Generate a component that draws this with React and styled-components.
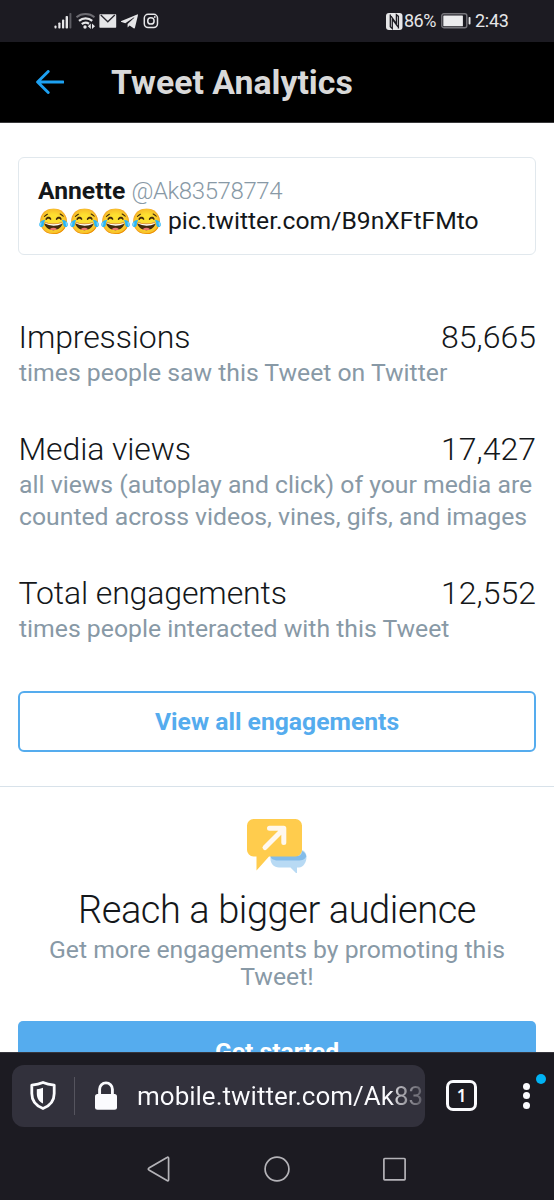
import React from "react";
import styled, { createGlobalStyle } from "styled-components";

const metrics = [
  {
    name: "Impressions",
    value: "85,665",
    lines: ["times people saw this Tweet on Twitter"],
  },
  {
    name: "Media views",
    value: "17,427",
    lines: [
      "all views (autoplay and click) of your media are",
      "counted across videos, vines, gifs, and images",
    ],
  },
  {
    name: "Total engagements",
    value: "12,552",
    lines: ["times people interacted with this Tweet"],
  },
];

const StatusIcons = () => (
  <svg width="108" height="20" viewBox="52 11 108 20" fill="none">
    <g fill="#e6e6e8">
      <rect x="54.5" y="25.5" width="2" height="3" rx="0.8" />
      <rect x="58.3" y="22.5" width="2.2" height="6" rx="0.8" />
      <rect x="62" y="19.5" width="2.2" height="9" rx="0.8" />
      <rect x="65.6" y="16" width="2.4" height="12.5" rx="0.8" />
      <rect x="69.4" y="13" width="2" height="15.5" rx="0.8" fill="#5d5c63" />
    </g>
    <path d="M76.5 17.3c5-4.3 13-4.3 18 0" stroke="#6d6c72" strokeWidth="2" />
    <path d="M79 20.8c3.8-3.2 9.4-3.2 13.2 0" stroke="#e6e6e8" strokeWidth="2.2" />
    <path d="M81.8 24.2c2-1.7 5-1.9 7.2-.5" stroke="#e6e6e8" strokeWidth="2.2" />
    <circle cx="85" cy="27" r="1.7" fill="#e6e6e8" />
    <path d="M90.8 23.5v5.4l-3-2.7zM92 23.5v5.4l3-2.7z" fill="#e6e6e8" />
    <rect x="99.4" y="14.3" width="16.8" height="13.4" rx="0.6" fill="#e6e6e8" />
    <path d="M100.8 15l7 6.8 7-6.8" stroke="#2a2930" strokeWidth="1.3" />
    <path
      d="M137.2 14.4 121.4 21c-.7.3-.5.9.1 1.1l3.8 1.2 8.5-5.8c.5-.3.8 0 .5.3l-6.7 6.2v3.5l2-1.9 4 2.6c.7.4 1.2.1 1.4-.7l2.9-12.1c.2-.9-.1-1.2-.7-1z"
      fill="#e6e6e8"
    />
    <rect x="144.3" y="14.3" width="13.2" height="13.2" rx="3.8" stroke="#e6e6e8" strokeWidth="1.5" />
    <circle cx="150.9" cy="20.9" r="3.2" stroke="#e6e6e8" strokeWidth="1.5" />
    <circle cx="154.8" cy="17" r="0.9" fill="#e6e6e8" />
  </svg>
);

const NfcIcon = () => (
  <svg width="17" height="17" viewBox="0 0 17 17">
    <rect width="16.5" height="17" rx="3" fill="#e6e6e8" />
    <path
      d="M4.3 1.5v12.2l2 1.8V6.2l5.5 7.4M12.4 15.5V3.4l-2-1.8v9.2L5 3.2"
      fill="none"
      stroke="#1c1b22"
      strokeWidth="1.3"
    />
  </svg>
);

const BatteryIcon = () => (
  <svg width="31" height="16" viewBox="0 0 31 16" fill="none">
    <rect x="0.8" y="0.8" width="25" height="13.9" rx="2" stroke="#77767c" strokeWidth="1.4" />
    <rect x="2.3" y="2.4" width="19.6" height="10.8" rx="0.5" fill="#ececee" />
    <rect x="27.6" y="4" width="1.9" height="7.6" rx="0.8" fill="#e6e6e8" />
  </svg>
);

const BackArrow = () => (
  <svg width="28" height="24" viewBox="0 0 28 24" fill="none">
    <path
      d="M12.2 1.5 1.6 12l10.6 10.5M2 12h25"
      stroke="#1da1f2"
      strokeWidth="2.9"
      strokeLinecap="round"
      strokeLinejoin="round"
    />
  </svg>
);

const PromoIcon = () => (
  <svg width="60" height="54" viewBox="0 0 60 54">
    <path
      d="M29 31h24.5c4 0 6 3.4 6 7 0 5.4-3 10-7.5 10.5H50v6.500l-6.500-6.500H32c-5 0-8.600-4-8.600-9 0-3.500 2-8.500 5.600-8.500z"
      fill="#b8daf4"
    />
    <path d="M23.500 37h27c3 0 4.500-2.300 4.500-5 2.500 1.200 4 3.200 4.300 5.500-1.500 3-4.500 4-7.300 4H31c-3.500 0-7.500-1.500-7.500-4.500z" fill="#83bce9" />
    <path
      d="M6.5 0h42a6.5 6.5 0 0 1 6.5 6.5V31a6.5 6.5 0 0 1-6.5 6.5H22L9.5 51.5v-14h-3A6.5 6.5 0 0 1 0 31V6.500A6.500 6.500 0 0 1 6.500 0z"
      fill="#ffcc4d"
    />
    <path
      d="M18 28.500 36 10.500M22.500 9.300h14.300v14.300"
      fill="none"
      stroke="#fff8ee"
      strokeWidth="5"
      strokeLinecap="round"
      strokeLinejoin="round"
    />
  </svg>
);

const ShieldIcon = () => (
  <svg width="26" height="29" viewBox="0 0 26 29">
    <path
      d="M13 1.5c3.5 1.5 7 2.2 11.2 2.6v8.4c0 7-4.2 12.3-11.2 15-7-2.7-11.2-8-11.2-15V4.1C6 3.7 9.5 3 13 1.5z"
      fill="none"
      stroke="#fbfbfe"
      strokeWidth="2.8"
      strokeLinejoin="round"
    />
    <path d="M13 6.8v15.6c-4.2-2-6.2-5.3-6.2-9.7V8.3c2.2-.3 4.2-.8 6.2-1.5z" fill="#fbfbfe" />
  </svg>
);

const LockIcon = () => (
  <svg width="22" height="29" viewBox="0 0 22 29">
    <rect y="13" width="22" height="15.7" rx="2.5" fill="#fbfbfe" />
    <path d="M4.6 14V8.3a6.4 6.4 0 0 1 12.8 0V14" fill="none" stroke="#fbfbfe" strokeWidth="2.9" />
  </svg>
);

const NavIcons = () => (
  <svg width="260" height="28" viewBox="147 1155 260 28" fill="none" stroke="#b4b3b8" strokeWidth="1.7">
    <path d="M168.6 1158.3v21.4c0 1-.8 1.400-1.600.9l-18.100-10.700c-.8-.5-.8-1.300 0-1.800l18.100-10.700c.8-.5 1.600-.1 1.600.9z" />
    <circle cx="277" cy="1169" r="11.9" />
    <rect x="383.9" y="1158.5" width="21.2" height="21.4" rx="0.8" />
  </svg>
);

const App = () => {
  return (
    <Screen>
      <GlobalStyle />
      <StatusBar>
        <StatusIcons />
        <StatusRight>
          <NfcIcon />
          <StatusText>86%</StatusText>
          <BatteryIcon />
          <Clock>2:43</Clock>
        </StatusRight>
      </StatusBar>

      <Header>
        <BackArrow />
        <Title>Tweet Analytics</Title>
      </Header>

      <Content>
        <TweetCard>
          <TweetAuthor>
            <strong>Annette</strong> <Handle>@Ak83578774</Handle>
          </TweetAuthor>
          <TweetBody>
            <Emoji>😂😂😂😂</Emoji>
            <span>pic.twitter.com/B9nXFtFMto</span>
          </TweetBody>
        </TweetCard>

        <Metrics>
          {metrics.map((metric) => (
            <div key={metric.name}>
              <MetricRow>
                <MetricName>{metric.name}</MetricName>
                <span>{metric.value}</span>
              </MetricRow>
              {metric.lines.map((line) => (
                <MetricNote key={line}>{line}</MetricNote>
              ))}
            </div>
          ))}
        </Metrics>

        <OutlineButton>View all engagements</OutlineButton>

        <Promo>
          <PromoIcon />
          <PromoTitle>Reach a bigger audience</PromoTitle>
          <PromoText>
            Get more engagements by promoting this
            <br />
            Tweet!
          </PromoText>
          <SolidButton>Get started</SolidButton>
        </Promo>
      </Content>

      <BrowserBar>
        <AddressBar>
          <ShieldIcon />
          <Divider />
          <LockIcon />
          <Address>mobile.twitter.com/Ak83</Address>
        </AddressBar>
        <TabCount>1</TabCount>
        <MenuButton aria-label="Menu">
          <Dot />
          <Dot />
          <Dot />
          <UpdateBadge />
        </MenuButton>
      </BrowserBar>

      <NavBar>
        <NavIcons />
      </NavBar>
    </Screen>
  );
};

// Styled Components
const GlobalStyle = createGlobalStyle`
  * {
    box-sizing: border-box;
  }

  body {
    margin: 0;
    font-family: Roboto, "Liberation Sans", sans-serif;
    color: #14171a;
  }

  button {
    font-family: inherit;
  }
`;

const Screen = styled.div`
  width: 554px;
  height: 1200px;
  display: flex;
  flex-direction: column;
  overflow: hidden;
  background: #fff;
`;

const StatusBar = styled.div`
  flex: none;
  height: 42px;
  padding: 0 46px 0 52px;
  display: flex;
  align-items: center;
  justify-content: space-between;
  background: #1c1b22;
  color: #e6e6e8;
`;

const StatusRight = styled.div`
  display: flex;
  align-items: center;
`;

const StatusText = styled.span`
  width: 37px;
  margin-left: 1px;
  font-size: 18px;
  letter-spacing: -0.5px;
  line-height: 20px;
  white-space: nowrap;
`;

const Clock = styled(StatusText)`
  width: 33px;
  margin-left: 3px;
  letter-spacing: -0.3px;
`;

const Header = styled.header`
  flex: none;
  height: 81px;
  padding-left: 36px;
  display: flex;
  align-items: center;
  gap: 47px;
  background: #000;
  border-bottom: 1px solid #38383a;
`;

const Title = styled.h1`
  margin: 0;
  padding-top: 1px;
  font-size: 33.8px;
  font-weight: 700;
  line-height: 40px;
  color: #d9d9d9;
`;

const Content = styled.main`
  flex: 1;
  min-height: 0;
  overflow: hidden;
  padding-top: 34px;
`;

const TweetCard = styled.div`
  height: 98px;
  margin: 0 18px;
  padding: 18px 20px;
  border: 1.5px solid #e1e8ed;
  border-radius: 6px;
  font-size: 24.7px;
  line-height: 30px;
`;

const TweetAuthor = styled.div`
  margin-left: -1px;
  white-space: nowrap;
`;

const Handle = styled.span`
  color: #8899a6;
  font-size: 24px;
  font-weight: 300;
  letter-spacing: -0.4px;
`;

const TweetBody = styled.div`
  display: flex;
  gap: 7px;
  height: 30px;
  margin-left: -1px;
  white-space: nowrap;
`;

const Emoji = styled.span`
  width: 123px;
  padding-top: 1px;
  font-family: "Noto Color Emoji", Roboto, sans-serif;
  font-size: 25px;
`;

const Metrics = styled.section`
  display: flex;
  flex-direction: column;
  gap: 40px;
  padding: 62px 18px 0 19px;
`;

const MetricRow = styled.div`
  display: flex;
  justify-content: space-between;
  font-size: 32px;
  font-weight: 300;
  line-height: 40px;
`;

const MetricName = styled.span`
  margin-left: -0.5px;
  letter-spacing: -0.12px;
`;

const MetricNote = styled.div`
  font-size: 24.75px;
  line-height: 32px;
  color: #8899a6;
  white-space: nowrap;
`;

const OutlineButton = styled.button`
  display: block;
  width: 518px;
  height: 61px;
  margin: 46px 18px 0;
  padding: 0;
  border: 2px solid #55acee;
  border-radius: 6px;
  background: #fff;
  color: #55acee;
  font-size: 24.7px;
  font-weight: 700;
`;

const Promo = styled.section`
  display: flex;
  flex-direction: column;
  align-items: center;
  margin-top: 34px;
  padding: 32px 18px 0;
  border-top: 1px solid #d8e2ea;
`;

const PromoTitle = styled.h2`
  margin: 15px 0 0;
  font-size: 38px;
  font-weight: 300;
  letter-spacing: -0.42px;
  line-height: 44px;
  white-space: nowrap;
`;

const PromoText = styled.p`
  margin: 4px 0 0;
  font-size: 24.75px;
  line-height: 27px;
  text-align: center;
  color: #8899a6;
  white-space: nowrap;
`;

const SolidButton = styled.button`
  flex: none;
  width: 518px;
  height: 61px;
  margin-top: 31px;
  padding: 0;
  border: 0;
  border-radius: 5px;
  background: #55acee;
  color: #fff;
  font-size: 24.7px;
  font-weight: 700;
`;

const BrowserBar = styled.div`
  flex: none;
  height: 86px;
  padding: 0 18px 0 12px;
  display: flex;
  align-items: center;
  background: #1c1b22;
  border-top: 1px solid #37363d;
`;

const AddressBar = styled.div`
  width: 413px;
  height: 62px;
  padding-left: 18px;
  display: flex;
  align-items: center;
  overflow: hidden;
  background: #32313c;
  border-radius: 12px;
`;

const Divider = styled.div`
  width: 1px;
  height: 38px;
  margin: 0 20px 0 18px;
  background: #55545e;
`;

const Address = styled.span`
  flex: 1;
  margin-left: 20px;
  font-size: 26px;
  line-height: 32px;
  white-space: nowrap;
  overflow: hidden;
  color: transparent;
  background: linear-gradient(90deg, #fbfbfe 88%, #b5b4ba 91%, #55545e 100%);
  background-clip: text;
`;

const TabCount = styled.div`
  width: 31px;
  height: 31px;
  margin-left: 21px;
  display: flex;
  align-items: center;
  justify-content: center;
  border: 3px solid #fbfbfe;
  border-radius: 7px;
  color: #fbfbfe;
  font-family: "Noto Sans", Roboto, sans-serif;
  font-size: 17px;
  font-weight: 600;
`;

const MenuButton = styled.button`
  position: relative;
  width: 7px;
  height: 26px;
  margin-left: 46px;
  padding: 0;
  display: flex;
  flex-direction: column;
  justify-content: space-between;
  border: 0;
  background: none;
`;

const Dot = styled.span`
  width: 7px;
  height: 7px;
  border-radius: 50%;
  background: #fbfbfe;
`;

const UpdateBadge = styled.span`
  position: absolute;
  top: -9px;
  left: 13px;
  width: 10px;
  height: 10px;
  border-radius: 50%;
  background: #00b3f4;
`;

const NavBar = styled.nav`
  flex: 1 0 62px;
  max-height: 62px;
  display: flex;
  justify-content: center;
  align-items: center;
  background: #1c1b22;
`;

export default App;
